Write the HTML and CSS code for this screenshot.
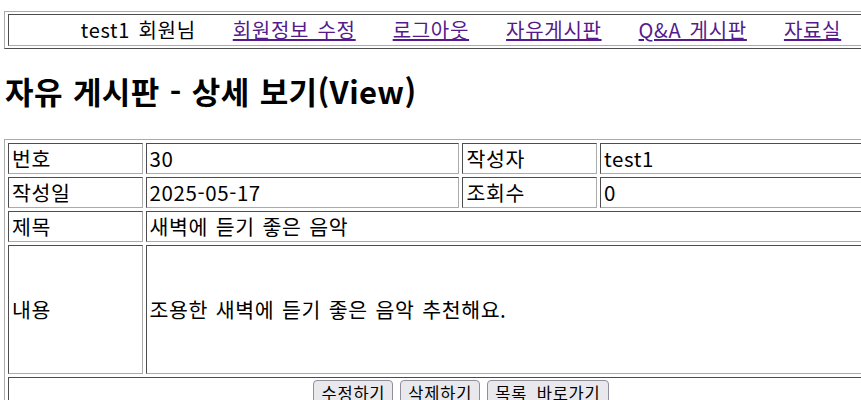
FILE: index.html
```html
<!DOCTYPE html>
<html lang="ko">
<head>
<meta charset="utf-8">
<title>자유 게시판 - 상세 보기(View)</title>
<link rel="stylesheet" href="styles.css">
</head>
<body>
<table class="frame topbar">
  <tr>
    <td class="topbar-cell">
      <div class="menu">
        <span class="user">test1 회원님</span>
        <a href="#" class="link">회원정보 수정</a>
        <a href="#" class="link">로그아웃</a>
        <a href="#" class="link">자유게시판</a>
        <a href="#" class="link">Q&amp;A 게시판</a>
        <a href="#" class="link">자료실</a>
      </div>
    </td>
  </tr>
</table>

<h2 class="title">자유 게시판 - 상세 보기(View)</h2>

<table class="frame detail">
  <colgroup>
    <col class="c-label"><col class="c-value"><col class="c-label"><col class="c-value">
  </colgroup>
  <tr>
    <td>번호</td><td>30</td>
    <td>작성자</td><td>test1</td>
  </tr>
  <tr>
    <td>작성일</td><td>2025-05-17</td>
    <td>조회수</td><td>0</td>
  </tr>
  <tr>
    <td>제목</td><td colspan="3">새벽에 듣기 좋은 음악</td>
  </tr>
  <tr>
    <td class="tall">내용</td><td colspan="3" class="tall">조용한 새벽에 듣기 좋은 음악 추천해요.</td>
  </tr>
  <tr>
    <td colspan="4" class="actions-cell">
      <div class="actions">
        <button type="button" class="btn">수정하기</button>
        <button type="button" class="btn">삭제하기</button>
        <button type="button" class="btn">목록 바로가기</button>
      </div>
    </td>
  </tr>
</table>
</body>
</html>
```

FILE: styles.css
```css
html {
  overflow: hidden;
}
body {
  margin: 0;
  padding: 11px 4px 0;
  font-family: "Noto Sans CJK KR", "Noto Sans", sans-serif;
  color: #000;
  background: #fff;
}
.frame {
  width: 914px;
  border: 1px solid;
  border-color: #ababab #4d4d4d #4d4d4d #ababab;
  border-collapse: separate;
}
.frame td {
  border: 1px solid;
  border-color: #4d4d4d #ababab #ababab #4d4d4d;
  box-sizing: border-box;
}
.topbar {
  border-spacing: 3px 2px;
}
.topbar-cell {
  padding: 2px 2px;
}
.menu {
  display: flex;
  justify-content: center;
  gap: 37px;
  font-size: 20px;
  line-height: 26px;
  letter-spacing: 0.7px;
  word-spacing: 2px;
}
.link {
  color: #551a8b;
  text-decoration: underline;
}
.title {
  margin: 22px 0 28px 1px;
  font-size: 31px;
  line-height: 40px;
  font-weight: bold;
  letter-spacing: 0.4px;
  word-spacing: 1px;
}
.detail {
  table-layout: fixed;
  border-spacing: 3px;
}
.c-label { width: 15%; }
.c-value { width: 35%; }
.detail td {
  padding: 2px 3px;
  font-size: 20.5px;
  line-height: 25px;
  letter-spacing: 0.6px;
  word-spacing: 1.5px;
  vertical-align: middle;
}
.detail td.tall {
  height: 129px;
}
.detail td.actions-cell {
  padding: 2px 3px;
}
.actions {
  display: flex;
  justify-content: center;
  gap: 7px;
}
.btn {
  font-family: "Noto Sans CJK KR", "Noto Sans", sans-serif;
  font-size: 16.5px;
  line-height: 22px;
  letter-spacing: 0.8px;
  word-spacing: 4px;
  padding: 1px 7px;
  background: #e9e9ed;
  border: 1px solid #8f8f9d;
  border-radius: 4px;
  color: #000;
}
```
